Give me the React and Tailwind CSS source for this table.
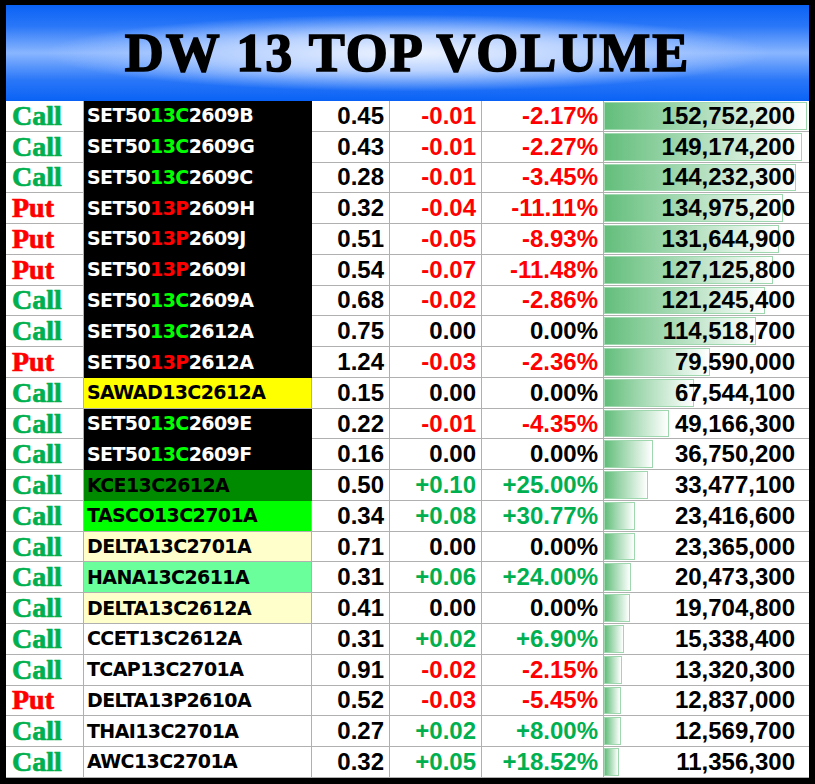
const ROWS = [
  ['C', 'SET50', '2609B', 'black', '0.45', '-0.01', '-2.17%', 152752200],
  ['C', 'SET50', '2609G', 'black', '0.43', '-0.01', '-2.27%', 149174200],
  ['C', 'SET50', '2609C', 'black', '0.28', '-0.01', '-3.45%', 144232300],
  ['P', 'SET50', '2609H', 'black', '0.32', '-0.04', '-11.11%', 134975200],
  ['P', 'SET50', '2609J', 'black', '0.51', '-0.05', '-8.93%', 131644900],
  ['P', 'SET50', '2609I', 'black', '0.54', '-0.07', '-11.48%', 127125800],
  ['C', 'SET50', '2609A', 'black', '0.68', '-0.02', '-2.86%', 121245400],
  ['C', 'SET50', '2612A', 'black', '0.75', '0.00', '0.00%', 114518700],
  ['P', 'SET50', '2612A', 'black', '1.24', '-0.03', '-2.36%', 79590000],
  ['C', 'SAWAD', '2612A', 'yellow', '0.15', '0.00', '0.00%', 67544100],
  ['C', 'SET50', '2609E', 'black', '0.22', '-0.01', '-4.35%', 49166300],
  ['C', 'SET50', '2609F', 'black', '0.16', '0.00', '0.00%', 36750200],
  ['C', 'KCE', '2612A', 'dark', '0.50', '+0.10', '+25.00%', 33477100],
  ['C', 'TASCO', '2701A', 'lime', '0.34', '+0.08', '+30.77%', 23416600],
  ['C', 'DELTA', '2701A', 'cream', '0.71', '0.00', '0.00%', 23365000],
  ['C', 'HANA', '2611A', 'mint', '0.31', '+0.06', '+24.00%', 20473300],
  ['C', 'DELTA', '2612A', 'cream', '0.41', '0.00', '0.00%', 19704800],
  ['C', 'CCET', '2612A', 'white', '0.31', '+0.02', '+6.90%', 15338400],
  ['C', 'TCAP', '2701A', 'white', '0.91', '-0.02', '-2.15%', 13320300],
  ['P', 'DELTA', '2610A', 'white', '0.52', '-0.03', '-5.45%', 12837000],
  ['C', 'THAI', '2701A', 'white', '0.27', '+0.02', '+8.00%', 12569700],
  ['C', 'AWC', '2701A', 'white', '0.32', '+0.05', '+18.52%', 11356300],
];

const MAX = 152752200;
const BAR_MAX = 203;

// name cell fills hide the gridlines, like in the sheet
const NAME_BG = {
  black: 'bg-black border-black text-white',
  yellow: 'bg-[#ffff00] border-[#b0b0b0] text-black',
  dark: 'bg-[#008a00] border-[#008a00] text-black',
  lime: 'bg-[#00ff00] border-[#b0b0b0] text-black',
  cream: 'bg-[#ffffcc] border-[#b0b0b0] text-black',
  mint: 'bg-[#6bff9b] border-[#b0b0b0] text-black',
  white: 'bg-white border-[#b0b0b0] text-black',
};

function tone(v) {
  if (v.startsWith('-')) return 'text-[#ff0000]';
  if (v.startsWith('+')) return 'text-[#00b050]';
  return 'text-black';
}

const num = "font-['Liberation_Sans',Arial,sans-serif] font-bold text-[24px] leading-none";

function Row({ row }) {
  const [type, base, tail, bg, price, chg, pct, vol] = row;
  const isCall = type === 'C';
  const code = isCall ? '13C' : '13P';
  return (
    <div className="flex-1 grid grid-cols-[78px_228px_78px_92px_122px_1fr] min-h-0">
      <div className="flex items-center pl-[6px] border-b border-r border-[#b0b0b0] bg-white">
        <span className={`font-['Liberation_Serif','Times_New_Roman',serif] font-bold text-[28px] leading-none [-webkit-text-stroke:0.7px_currentColor] ${isCall ? 'text-[#00b050]' : 'text-[#ff0000]'}`}>
          {isCall ? 'Call' : 'Put'}
        </span>
      </div>
      <div className={`flex items-center pl-[3px] border-b border-r ${NAME_BG[bg]}`}>
        <span className="font-['DejaVu_Sans',Verdana,sans-serif] font-bold text-[19px] leading-none tracking-[-0.6px]">
          {base}
          {bg === 'black' ? (
            <span className={isCall ? 'text-[#00ff00]' : 'text-[#ff0000]'}>{code}</span>
          ) : code}
          {tail}
        </span>
      </div>
      <div className="flex items-center justify-end pr-[5px] border-b border-r border-[#b0b0b0] bg-white">
        <span className={`${num} text-black`}>{price}</span>
      </div>
      <div className="flex items-center justify-end pr-[5px] border-b border-r border-[#b0b0b0] bg-white">
        <span className={`${num} ${tone(chg)}`}>{chg}</span>
      </div>
      <div className="flex items-center justify-end pr-[5px] border-b border-r border-[#b0b0b0] bg-white">
        <span className={`${num} ${tone(pct)}`}>{pct}</span>
      </div>
      <div className="relative flex items-center justify-end pr-[14px] border-b border-[#b0b0b0] bg-white">
        <div
          className="absolute left-0 top-[1px] bottom-[1px] border border-[#9fd8ae] bg-[linear-gradient(to_right,#63be7b,#ffffff)]"
          style={{ width: `${(vol / MAX) * BAR_MAX}px` }}
        />
        <span className={`${num} relative text-black`}>{vol.toLocaleString('en-US')}</span>
      </div>
    </div>
  );
}

export default function App() {
  return (
    <div className="w-[815px] h-[784px] bg-black pt-[5px] px-[6px] pb-[6px] flex flex-col">
      <div className="h-[96px] flex items-center justify-center bg-[radial-gradient(ellipse_45%_40%_at_50%_50%,#eef4ff_0%,#bcd4ff_45%,rgba(120,170,255,0)_100%),linear-gradient(to_bottom,#0a62f5_0%,#2a77f8_22%,#8ab6ff_50%,#2a77f8_78%,#0a62f5_100%)]">
        <h1 className="font-['Liberation_Serif','Times_New_Roman',serif] font-bold text-[54px] leading-none tracking-[2px] text-black [-webkit-text-stroke:1.6px_black]">
          DW 13 TOP VOLUME
        </h1>
      </div>
      <div className="h-[677px] flex flex-col bg-white">
        {ROWS.map((r, i) => <Row key={i} row={r} />)}
      </div>
    </div>
  );
}
